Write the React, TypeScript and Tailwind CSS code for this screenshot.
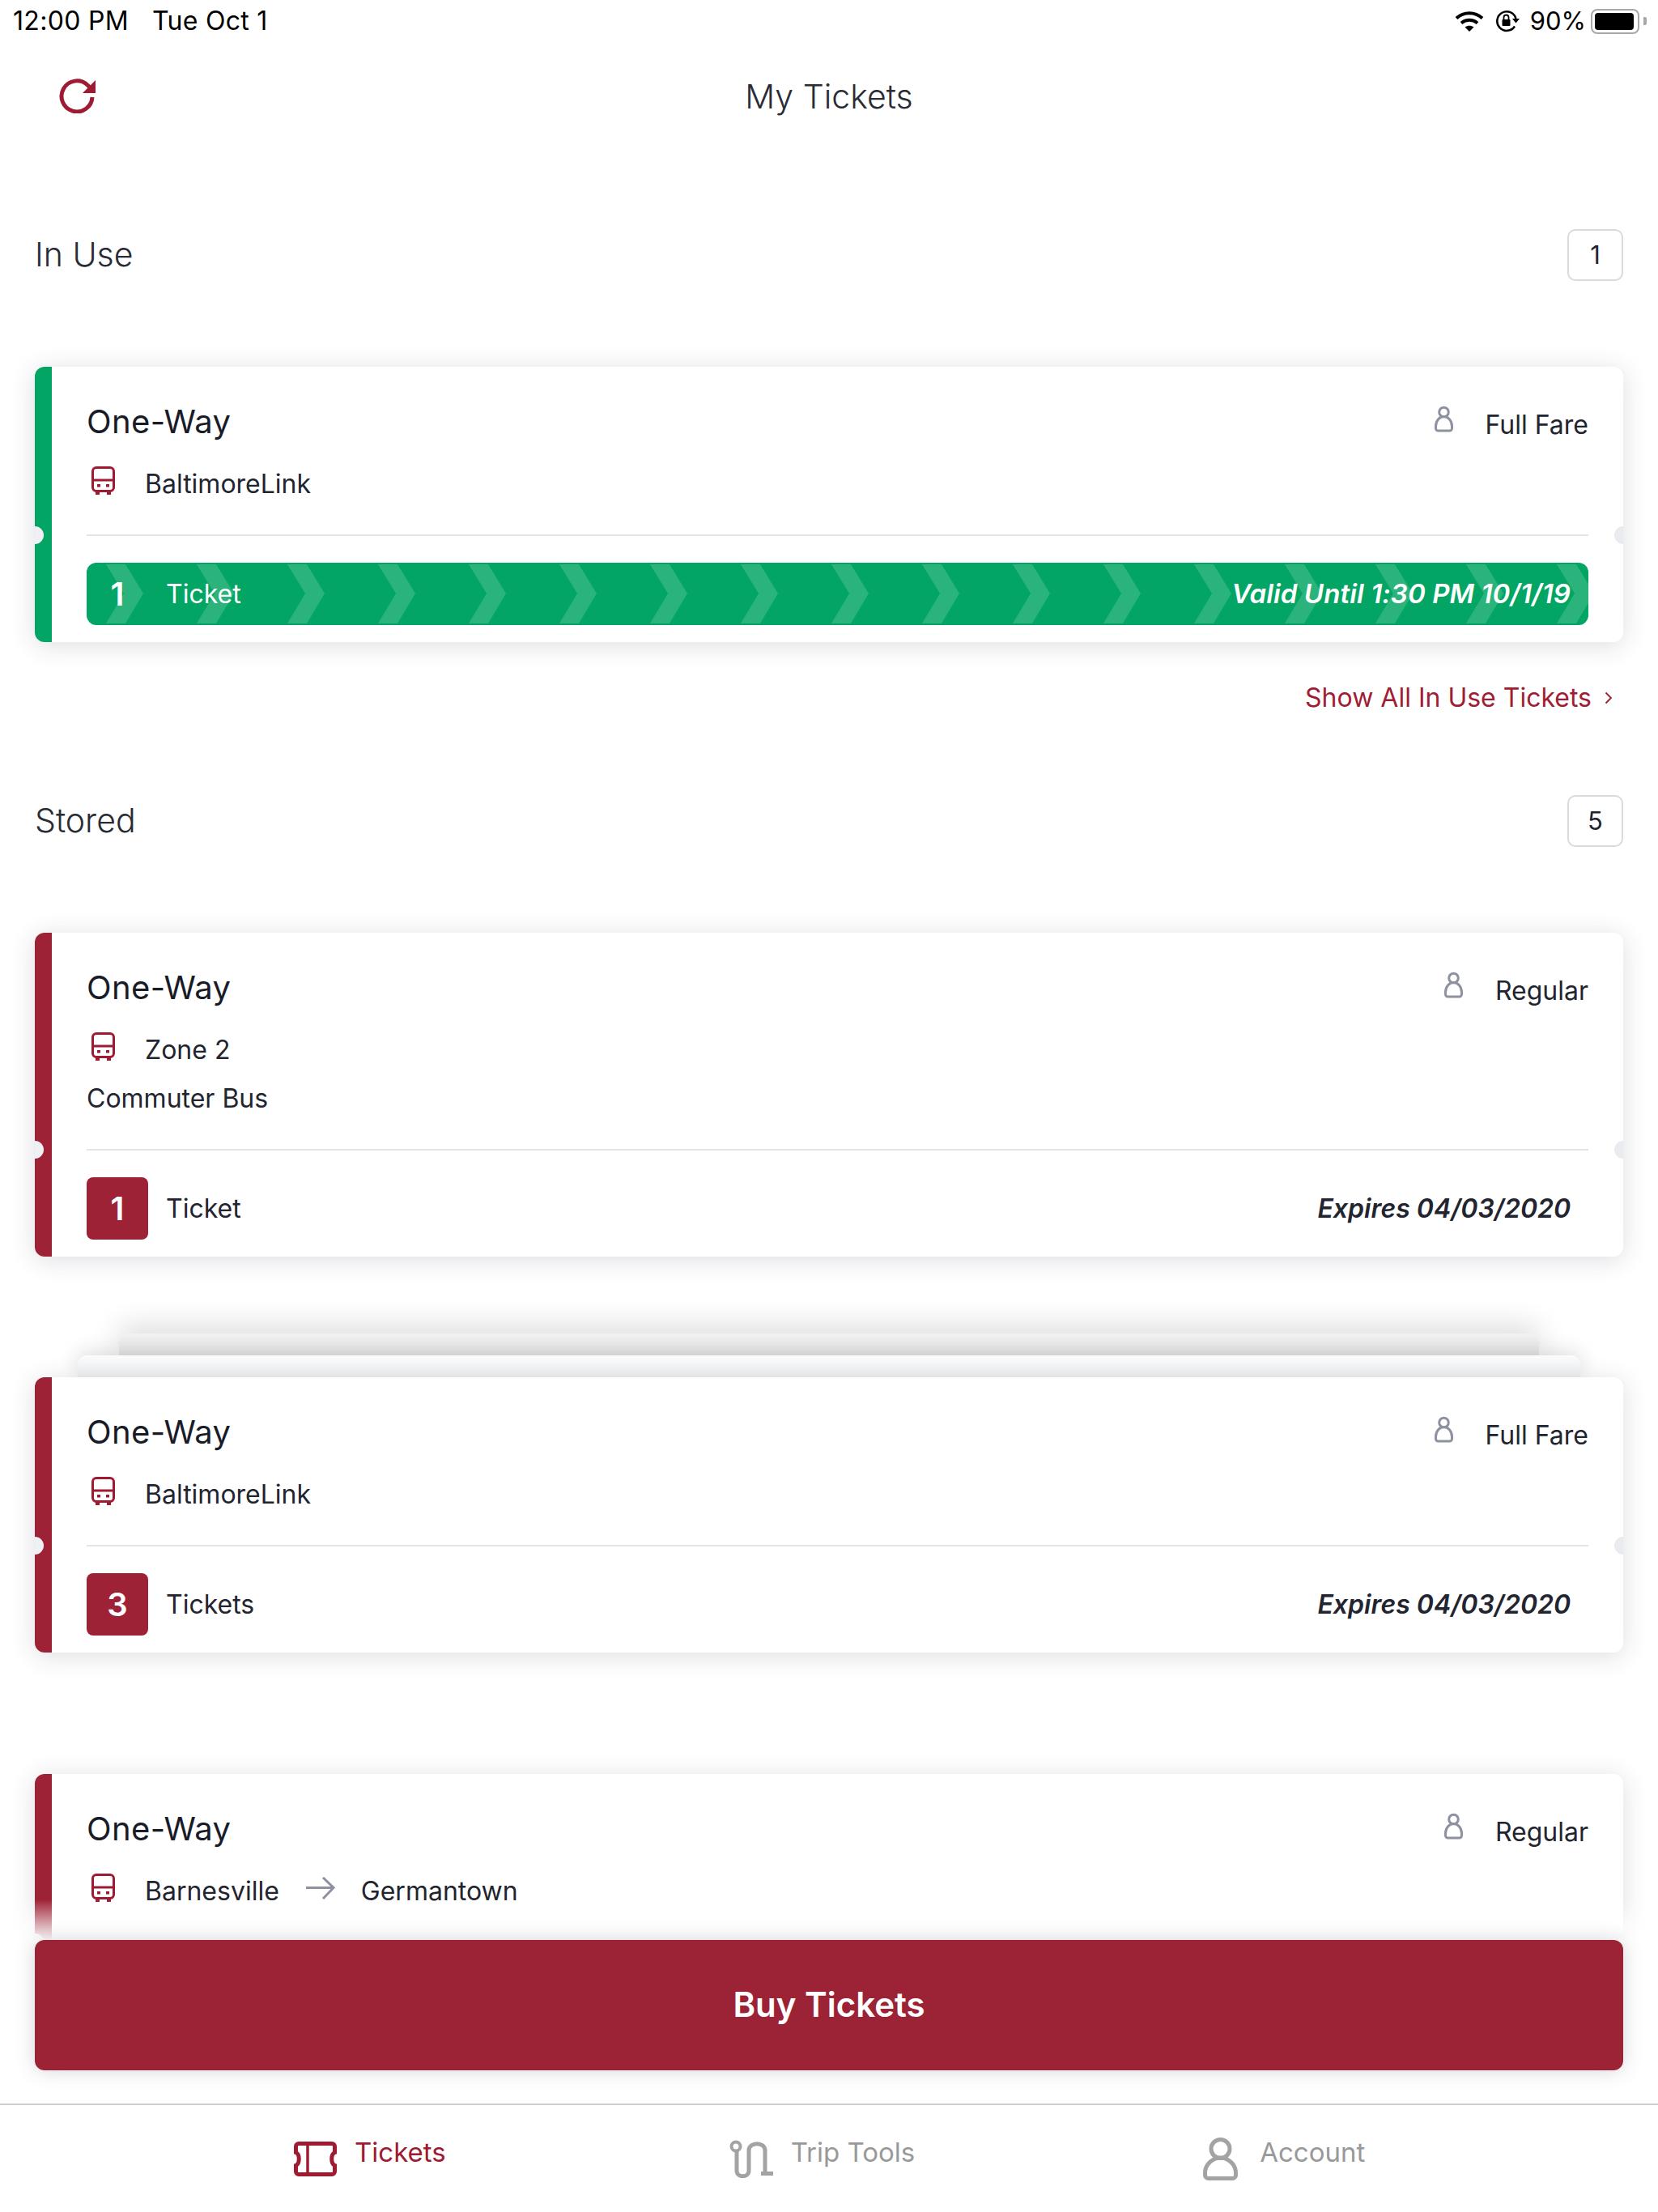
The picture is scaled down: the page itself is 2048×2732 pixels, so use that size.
import type { ReactNode } from "react";

const chevrons = Array.from({ length: 17 }, (_, i) => 24 + i * 112);

function RefreshIcon() {
    return (
        <svg width="46" height="44" viewBox="0 0 46 44" fill="none">
            <path d="M41 24a19 19 0 1 1-6-15l6 6" stroke="#9e1b32" strokeWidth="5" />
            <path d="M45 3v16H29z" fill="#9e1b32" />
        </svg>
    );
}

function BusIcon() {
    return (
        <svg width="29" height="35" viewBox="0 0 29 35" fill="none" className="shrink-0">
            <rect x="1.5" y="1.5" width="26" height="29" rx="4.5" stroke="#9e1b32" strokeWidth="3" />
            <path d="M2 17h25" stroke="#9e1b32" strokeWidth="3" />
            <rect x="7" y="22" width="4" height="3.5" fill="#9e1b32" />
            <rect x="18" y="22" width="4" height="3.5" fill="#9e1b32" />
            <path d="M5 31h5v4H5zM19 31h5v4h-5z" fill="#9e1b32" />
        </svg>
    );
}

function PersonIcon() {
    return (
        <svg width="23" height="33" viewBox="0 0 23 33" fill="none" className="shrink-0 -mt-[8px]">
            <circle cx="11.5" cy="8" r="5.8" stroke="#8e919f" strokeWidth="3" />
            <path d="M11.5 13.5c5.5 0 10 5.5 10 12v2.5a3 3 0 0 1-3 3h-14a3 3 0 0 1-3-3v-2.5c0-6.500 4.500-12 10-12z" stroke="#8e919f" strokeWidth="3" />
        </svg>
    );
}

function ArrowIcon() {
    return (
        <svg width="36" height="28" viewBox="0 0 36 28" fill="none" className="-mt-[8px]">
            <path d="M0 13.500h33M21 1l13 12.500L21 27" stroke="#8e919f" strokeWidth="3" />
        </svg>
    );
}

function TicketTabIcon() {
    return (
        <svg width="53" height="43" viewBox="0 0 53 43" fill="none" className="shrink-0">
            <path
                d="M6 2.500h41a3.500 3.500 0 0 1 3.500 3.500v7.500c-5 2-5 14 0 16V37a3.500 3.500 0 0 1-3.500 3.500H6A3.500 3.500 0 0 1 2.500 37v-7.500c5-2 5-14 0-16V6A3.500 3.500 0 0 1 6 2.500z"
                stroke="#9e1b32"
                strokeWidth="5"
            />
            <path d="M17 3v37" stroke="#9e1b32" strokeWidth="3.500" />
        </svg>
    );
}

function TripToolsIcon() {
    return (
        <svg width="54" height="47" viewBox="0 0 54 47" fill="none" className="shrink-0">
            <circle cx="8" cy="8" r="5.500" stroke="#a3a3a3" strokeWidth="4" />
            <path d="M9 13v25c0 9 15 9 15 0V13c0-11 20-11 20 0v28" stroke="#a3a3a3" strokeWidth="5" />
            <path d="M39 39h15v5H39z" fill="#a3a3a3" />
        </svg>
    );
}

function AccountIcon() {
    return (
        <svg width="43" height="53" viewBox="0 0 43 53" fill="none" className="shrink-0">
            <circle cx="21.500" cy="14" r="11.500" stroke="#a3a3a3" strokeWidth="5" />
            <path d="M21.500 25C31 25 40.500 33 40.500 44v2.500a4 4 0 0 1-4 4h-30a4 4 0 0 1-4-4V44C2.500 33 12 25 21.500 25z" stroke="#a3a3a3" strokeWidth="5" />
        </svg>
    );
}

function WifiIcon() {
    return (
        <svg width="36" height="26" viewBox="0 0 36 26" fill="none">
            <path d="M2 9.500c9-8.500 23-8.500 32 0" stroke="#000" strokeWidth="4" />
            <path d="M8 15.500c6-5 14-5 20 0" stroke="#000" strokeWidth="4" />
            <path d="M12.500 20.500c3.500-2.500 7.500-2.500 11 0L18 26z" fill="#000" />
        </svg>
    );
}

function RotationLockIcon() {
    return (
        <svg width="30" height="28" viewBox="0 0 30 28" fill="none">
            <path d="M24 20.500A11.800 11.800 0 1 1 25.500 11" stroke="#000" strokeWidth="2.500" />
            <path d="M21 11h9l-4.500 5.500z" fill="#000" />
            <rect x="8.500" y="12" width="10" height="8" rx="1" fill="#000" />
            <path d="M10.500 12V9.500a3 3 0 0 1 6 0V12" stroke="#000" strokeWidth="1.800" />
        </svg>
    );
}

function Notch({ side }: { side: "left" | "right" }) {
    return (
        <div
            className={
                side === "left"
                    ? "absolute -left-[11px] top-[-10px] h-[22px] w-[22px] rounded-full bg-[#eff0f3]"
                    : "absolute -right-[11px] top-[-10px] h-[22px] w-[22px] rounded-full bg-[#eaebee]"
            }
        />
    );
}

function Divider() {
    return <div className="h-[2px] bg-[#e3e4e8]" />;
}

interface TicketCardProps {
    accent: string;
    fare: string;
    route: ReactNode;
    extra?: string;
    footer?: ReactNode;
}

function TicketCard({ accent, fare, route, extra, footer }: TicketCardProps) {
    return (
        <div className="relative mx-[43px] flex overflow-hidden rounded-[12px] bg-white shadow-[0_4px_30px_rgba(40,45,60,0.16)]">
            <div className={`w-[21px] shrink-0 ${accent}`} />
            <div className="min-w-0 flex-1 pl-[43px] pr-[43px]">
                <div className="mt-[43px] flex h-[50px] items-center justify-between">
                    <span className="text-[40px] font-normal tracking-[0.4px] text-[#191c27]">One-Way</span>
                    <div className="flex items-center gap-[40px] text-[32px] text-[#22252f]">
                        <PersonIcon />
                        <span className="mt-[7px]">{fare}</span>
                    </div>
                </div>
                <div className="mt-[27px] flex h-[50px] items-center pl-[6px] text-[32px] text-[#22252f]">
                    <div className="-mt-[9px]">
                        <BusIcon />
                    </div>
                    {route}
                </div>
                {extra && <div className="mt-[10px] flex h-[50px] items-center text-[32px] text-[#22252f]">{extra}</div>}
                {footer && (
                    <div className="pb-[21px]">
                        <div className="relative mt-[37px]">
                            <Divider />
                        </div>
                        <div className="mt-[33px]">{footer}</div>
                    </div>
                )}
            </div>
            {footer && (
                <div className="pointer-events-none absolute bottom-[131px] left-0 right-0 h-[2px]">
                    <Notch side="left" />
                    <Notch side="right" />
                </div>
            )}
        </div>
    );
}

function StoredFooter({ count, label }: { count: number; label: string }) {
    return (
        <div className="flex h-[77px] items-center">
            <div className="flex h-[77px] w-[76px] items-center justify-center rounded-[8px] bg-[#9e2236] text-[40px] font-semibold text-white">
                {count}
            </div>
            <span className="ml-[22px] text-[32px] text-[#22252f]">{label}</span>
            <span className="ml-auto mr-[22px] text-[32px] font-semibold italic text-[#22252f]">Expires 04/03/2020</span>
        </div>
    );
}

function SectionHeading({ title, count }: { title: string; count: number }) {
    return (
        <div className="mx-[43px] flex h-[64px] items-center justify-between">
            <span className="text-[41px] font-light text-[#2a2c35]">{title}</span>
            <div className="flex h-[64px] w-[69px] items-center justify-center rounded-[10px] border-2 border-[#d8dade] text-[31px] text-[#22252f]">
                {count}
            </div>
        </div>
    );
}

function Route({ children }: { children: string }) {
    return <span className="ml-[37px]">{children}</span>;
}

export default function App() {
    return (
        <div className="relative flex h-[2732px] w-[2048px] flex-col overflow-hidden bg-white font-['Inter',sans-serif]">
            {/* Status bar */}
            <div className="flex h-[50px] shrink-0 items-center pl-[16px] pr-[14px] pt-[2px] text-[32px] tracking-[0.3px] text-black">
                <span>12:00 PM</span>
                <span className="ml-[29px]">Tue Oct 1</span>
                <div className="ml-auto flex items-center">
                    <WifiIcon />
                    <div className="ml-[14px]">
                        <RotationLockIcon />
                    </div>
                    <span className="ml-[13px] text-[31px] tracking-normal">90%</span>
                    <div className="ml-[6px] flex items-center">
                        <div className="h-[31px] w-[60px] rounded-[8px] border-2 border-[#a8a8a8] p-[3px]">
                            <div className="h-full w-[48px] rounded-[4px] bg-black" />
                        </div>
                        <div className="ml-[5px] h-[10px] w-[4px] rounded-r-[2px] bg-[#a8a8a8]" />
                    </div>
                </div>
            </div>

            {/* Header */}
            <div className="relative flex h-[140px] shrink-0 items-center justify-center">
                <div className="absolute left-[73px] top-[46px]">
                    <RefreshIcon />
                </div>
                <span className="text-[41px] font-light text-[#2a2c35]">My Tickets</span>
            </div>

            {/* Ticket list */}
            <div className="relative min-h-0 flex-1 overflow-hidden">
                <div className="pt-[93px]">
                    <SectionHeading title="In Use" count={1} />
                    <div className="mt-[106px]">
                        <TicketCard
                            accent="bg-[#03a564]"
                            fare="Full Fare"
                            route={<Route>BaltimoreLink</Route>}
                            footer={
                                <div className="relative flex h-[77px] items-center overflow-hidden rounded-[12px] bg-[#03a564] text-white">
                                    <svg width="1855" height="77" viewBox="0 0 1855 77" className="absolute left-0 top-0">
                                        {chevrons.map((x) => (
                                            <polygon
                                                key={x}
                                                points={`${x},2 ${x + 24},2 ${x + 46},38 ${x + 24},75 ${x},75 ${x + 22},38`}
                                                fill="#ffffff"
                                                fillOpacity="0.16"
                                            />
                                        ))}
                                    </svg>
                                    <div className="relative flex w-[76px] justify-center text-[40px] font-semibold">1</div>
                                    <span className="relative ml-[22px] text-[32px]">Ticket</span>
                                    <span className="relative ml-auto mr-[22px] text-[33px] font-semibold italic tracking-[0.1px]">Valid Until 1:30 PM 10/1/19</span>
                                </div>
                            }
                        />
                    </div>
                    <div className="mx-[43px] flex h-[138px] items-center justify-end gap-[16px] pr-[13px] text-[32px] text-[#a01d33]">
                        <span>Show All In Use Tickets</span>
                        <svg width="10" height="16" viewBox="0 0 10 16" fill="none">
                            <path d="M1.500 1.500L8 8l-6.500 6.500" stroke="#a01d33" strokeWidth="1.800" />
                        </svg>
                    </div>

                    <div className="mt-[51px]">
                        <SectionHeading title="Stored" count={5} />
                    </div>
                    <div className="mt-[106px]">
                        <TicketCard
                            accent="bg-[#9e2236]"
                            fare="Regular"
                            route={<Route>Zone 2</Route>}
                            extra="Commuter Bus"
                            footer={<StoredFooter count={1} label="Ticket" />}
                        />
                    </div>

                    {/* Stack of three */}
                    <div className="mt-[95px]">
                        <div className="mx-[147px] h-[27px] rounded-t-[12px] bg-gradient-to-b from-[#f3f3f4] to-[#e6e6e7] shadow-[0_-6px_36px_rgba(30,30,35,0.2)]" />
                        <div className="relative mx-[96px] h-[27px] rounded-t-[12px] bg-gradient-to-b from-[#fcfcfc] to-[#eff0f1] shadow-[0_-4px_24px_rgba(30,30,35,0.16)]" />
                        <div className="relative">
                            <TicketCard
                                accent="bg-[#9e2236]"
                                fare="Full Fare"
                                route={<Route>BaltimoreLink</Route>}
                                footer={<StoredFooter count={3} label="Tickets" />}
                            />
                        </div>
                    </div>

                    <div className="mt-[150px]">
                        <TicketCard
                            accent="bg-[#9e2236]"
                            fare="Regular"
                            route={
                                <>
                                    <Route>Barnesville</Route>
                                    <span className="ml-[33px]">
                                        <ArrowIcon />
                                    </span>
                                    <span className="ml-[32px]">Germantown</span>
                                </>
                            }
                            footer={<div className="h-[77px]" />}
                        />
                    </div>
                </div>
                {/* Fade above the button */}
                <div className="absolute bottom-0 left-0 right-0 h-[50px] bg-gradient-to-b from-white/0 to-white" />
            </div>

            {/* Buy button */}
            <div className="relative shrink-0 bg-white px-[43px] pb-[41px]">
                <div className="flex h-[161px] items-center justify-center rounded-[12px] bg-[#9b2335] pb-[2px] text-[42px] font-semibold text-white shadow-[0_0_24px_rgba(40,45,60,0.2)]">
                    Buy Tickets
                </div>
            </div>

            {/* Tab bar */}
            <div className="flex h-[134px] shrink-0 items-start border-t-2 border-[#cfcfcf] pl-[363px] pt-[40px] text-[33px]">
                <div className="flex items-start gap-[22px] text-[#9e1b32]">
                    <div className="mt-[5px]">
                        <TicketTabIcon />
                    </div>
                    <span className="-mt-[6px]">Tickets</span>
                </div>
                <div className="ml-[350px] flex items-start gap-[22px] text-[#999999]">
                    <div className="mt-[3px]">
                        <TripToolsIcon />
                    </div>
                    <span className="-mt-[6px]">Trip Tools</span>
                </div>
                <div className="ml-[356px] flex items-start gap-[27px] text-[#999999]">
                    <AccountIcon />
                    <span className="-mt-[6px]">Account</span>
                </div>
            </div>
        </div>
    );
}
